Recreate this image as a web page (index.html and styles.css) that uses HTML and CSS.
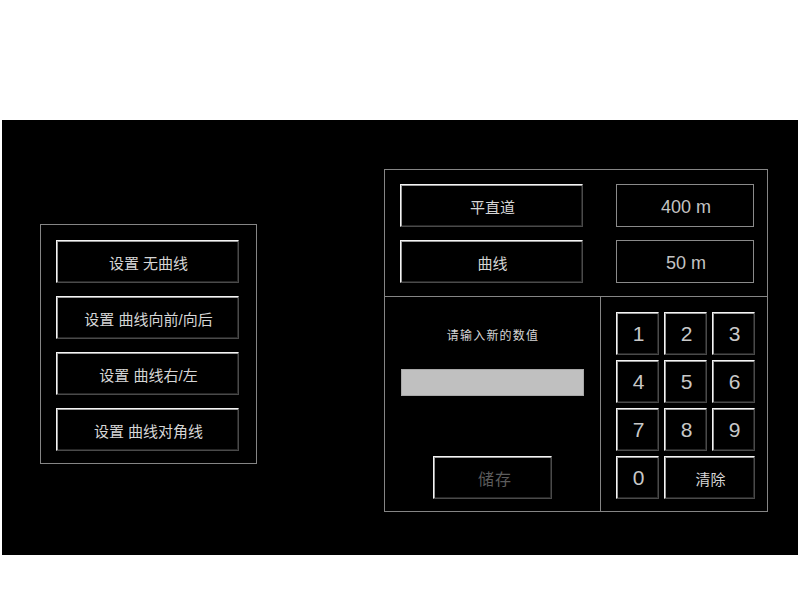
FILE: index.html
```html
<!DOCTYPE html>
<html lang="zh">
<head>
<meta charset="utf-8">
<title>曲线设置</title>
<link rel="stylesheet" href="styles.css">
</head>
<body>
<div class="stage">
  <div class="left-panel">
    <div class="btn wide">设置 无曲线</div>
    <div class="btn wide">设置 曲线向前/向后</div>
    <div class="btn wide">设置 曲线右/左</div>
    <div class="btn wide">设置 曲线对角线</div>
  </div>
  <div class="right-panel">
    <div class="top">
      <div class="row">
        <div class="btn wide">平直道</div>
        <div class="value">400 m</div>
      </div>
      <div class="row">
        <div class="btn wide">曲线</div>
        <div class="value">50 m</div>
      </div>
    </div>
    <div class="bottom">
      <div class="entry">
        <div class="prompt">请输入新的数值</div>
        <div class="input"></div>
        <div class="btn save">储存</div>
      </div>
      <div class="keypad">
        <div class="btn key">1</div>
        <div class="btn key">2</div>
        <div class="btn key">3</div>
        <div class="btn key">4</div>
        <div class="btn key">5</div>
        <div class="btn key">6</div>
        <div class="btn key">7</div>
        <div class="btn key">8</div>
        <div class="btn key">9</div>
        <div class="btn key">0</div>
        <div class="btn key clear">清除</div>
      </div>
    </div>
  </div>
</div>
</body>
</html>
```
FILE: styles.css
```css
* { box-sizing: border-box; }
html, body { margin: 0; padding: 0; background: #ffffff; }
body {
  font-family: "Liberation Sans", "Noto Sans CJK SC", sans-serif;
  width: 800px;
  height: 600px;
  overflow: hidden;
}
.stage {
  margin: 120px 0 0 2px;
  width: 796px;
  height: 435px;
  background: #000000;
  display: flex;
  align-items: flex-start;
  padding-left: 38px;
}
.left-panel {
  margin-top: 104px;
  width: 217px;
  height: 240px;
  border: 1px solid #858585;
  padding: 15px 0 0 15px;
  display: flex;
  flex-direction: column;
  gap: 13px;
}
.btn {
  display: flex;
  align-items: center;
  justify-content: center;
  background: #000;
  color: #d6d6d6;
  font-size: 15px;
  border-top: 1px solid #f4f4f4;
  border-left: 1px solid #f4f4f4;
  border-right: 1px solid #4a4a4a;
  border-bottom: 1px solid #4a4a4a;
  box-shadow: inset 1px 1px 0 #9c9c9c, inset -1px -1px 0 #262626;
  padding-top: 1px;
  padding-left: 2px;
}
.wide { width: 183px; height: 43px; }
.right-panel {
  margin-left: 127px;
  margin-top: 49px;
  width: 384px;
  height: 343px;
  border: 1px solid #858585;
  display: flex;
  flex-direction: column;
}
.top {
  height: 127px;
  border-bottom: 1px solid #858585;
  padding: 14px 0 0 15px;
  display: flex;
  flex-direction: column;
  gap: 13px;
}
.row { display: flex; gap: 33px; }
.value {
  width: 138px;
  height: 43px;
  border: 1px solid #8a8a8a;
  display: flex;
  align-items: center;
  justify-content: center;
  color: #c4c4c4;
  font-size: 18px;
  padding-top: 3px;
  padding-left: 2px;
}
.bottom { flex: 1; display: flex; }
.entry {
  width: 216px;
  border-right: 1px solid #858585;
  display: flex;
  flex-direction: column;
  align-items: center;
  padding-top: 31px;
}
.prompt {
  font-size: 12px;
  letter-spacing: 1.2px;
  line-height: 16px;
  color: #d6d6d6;
  padding-left: 1px;
}
.input {
  margin-top: 25px;
  width: 183px;
  height: 27px;
  background: #c0c0c0;
  border: 1px solid #a8a8a8;
}
.save {
  margin-top: 60px;
  width: 119px;
  height: 43px;
  color: #5c5c5c;
  font-size: 16px;
  letter-spacing: 1px;
  padding-left: 5px;
}
.keypad {
  padding: 15px 0 0 15px;
  display: grid;
  grid-template-columns: 43px 43px 43px;
  grid-auto-rows: 43px;
  gap: 5px;
  align-content: start;
}
.key { font-size: 21px; color: #c8c8c8; }
.clear { grid-column: span 2; font-size: 15px; color: #d6d6d6; }
```
